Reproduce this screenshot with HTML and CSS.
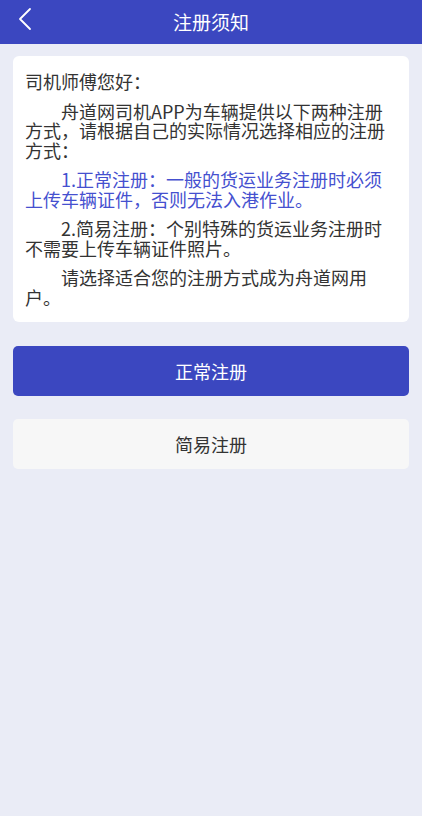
FILE: index.html
```html
<!DOCTYPE html>
<html lang="zh-CN">
<head>
  <meta charset="UTF-8">
  <title>注册须知</title>
  <link rel="stylesheet" href="styles.css">
</head>
<body>
  <header class="top-bar">
    <button class="back-btn" aria-label="返回">
      <svg width="14" height="24" viewBox="0 0 14 24">
        <path d="M12 2 L2 12 L12 22" fill="none" stroke="#fff" stroke-width="1.8" stroke-linecap="round" stroke-linejoin="round"/>
      </svg>
    </button>
    <h1 class="title">注册须知</h1>
  </header>

  <main class="content">
    <section class="notice-card">
      <p>司机师傅您好：</p>
      <p class="indent">舟道网司机APP为车辆提供以下两种注册方式，请根据自己的实际情况选择相应的注册方式：</p>
      <p class="indent highlight">1.正常注册：一般的货运业务注册时必须上传车辆证件，否则无法入港作业。</p>
      <p class="indent">2.简易注册：个别特殊的货运业务注册时不需要上传车辆证件照片。</p>
      <p class="indent">请选择适合您的注册方式成为舟道网用户。</p>
    </section>

    <div class="actions">
      <button class="btn btn-primary">正常注册</button>
      <button class="btn btn-light">简易注册</button>
    </div>
  </main>
</body>
</html>
```

FILE: styles.css
```css
/* Page base */
body {
  margin: 0;
  padding: 0;
  min-height: 816px;
  background-color: #eaecf6;
  font-family: "Noto Sans CJK SC", "Noto Sans", sans-serif;
  color: #333;
}

/* Top navigation bar */
.top-bar {
  position: relative;
  height: 44px;
  background-color: #3b47c0;
  display: flex;
  align-items: center;
  justify-content: center;
}

.back-btn {
  position: absolute;
  left: 18px;
  top: 7px;
  padding: 0;
  border: none;
  background: none;
  display: flex;
}

.title {
  margin: 0;
  font-size: 19px;
  font-weight: normal;
  color: #fff;
  line-height: 44px;
}

.content {
  padding: 12px 13px;
}

/* Notice card */
.notice-card {
  background-color: #fff;
  border-radius: 6px;
  padding: 16px 12px 15px;
}

.notice-card p {
  margin: 0 0 10px;
  font-size: 18px;
  line-height: 19.5px;
}

.notice-card p:last-child {
  margin-bottom: 0;
}

.indent {
  text-indent: 2em;
}

.highlight {
  color: #4550cf;
}

/* Buttons */
.actions {
  display: flex;
  flex-direction: column;
  gap: 23px;
  margin-top: 24px;
}

.btn {
  height: 50px;
  border: none;
  border-radius: 5px;
  font-family: inherit;
  font-size: 18px;
}

.btn-primary {
  background-color: #3b47c0;
  color: #fff;
}

.btn-light {
  background-color: #f7f7f7;
  color: #333;
}
```
